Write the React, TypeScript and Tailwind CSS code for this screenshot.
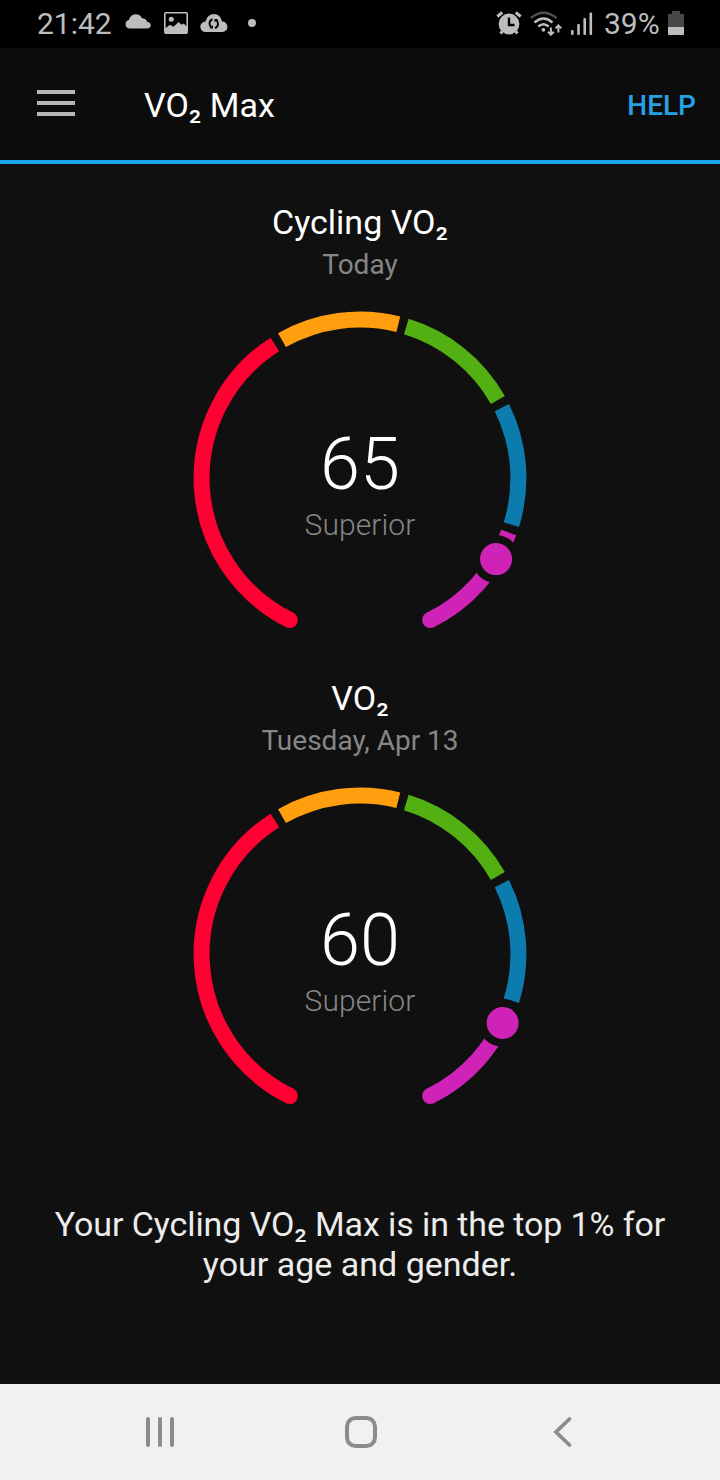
const SEGMENTS = [
	{ from: 206.3, to: 327.5, color: "#ff0033" },
	{ from: 330.5, to: 374, color: "#ff9f0f" },
	{ from: 17, to: 60.5, color: "#52b012" },
	{ from: 63.6, to: 107.1, color: "#0b7cad" },
	{ from: 110.1, to: 153.7, color: "#cf23b7" },
];

const RADIUS = 158.4;

// angles are in degrees, clockwise from the top
const point = (angle: number) => {
	const rad = (angle * Math.PI) / 180;
	return { x: 168 + RADIUS * Math.sin(rad), y: 168 - RADIUS * Math.cos(rad) };
};

const arc = (from: number, to: number) => {
	const a = point(from);
	const b = point(to);
	return `M${a.x} ${a.y}A${RADIUS} ${RADIUS} 0 0 1 ${b.x} ${b.y}`;
};

const StatusBar = () => (
	<div className="flex h-12 items-center justify-between bg-black pl-[37px] pr-[36px] text-[30px] leading-none text-[#bdbdbd]">
		<div className="flex h-full items-center pb-0.5">
			<span className="w-[75px] whitespace-nowrap pt-0.5">21:42</span>
			<svg className="mb-[3px] ml-[13px]" width="26" height="15" viewBox="0 0 26 15" fill="currentColor">
				<path d="M4.200 14.500A4.300 4.300 0 0 1 3.800 6.100C5 2.200 7.500 0.200 10.700 0.200C13.800 0.200 15.800 1.600 17 4.200C19.800 4.200 21.600 5.500 22 7.800C24.500 8.200 25.800 9.500 25.800 11.300C25.800 13.300 24.300 14.500 22 14.500Z" />
			</svg>
			<svg className="ml-[13px]" width="24" height="22" viewBox="0 0 24 22">
				<rect x="0.800" y="0.800" width="22.400" height="20.400" rx="1" fill="none" stroke="currentColor" strokeWidth="1.600" />
				<circle cx="7.300" cy="7.200" r="2.500" fill="currentColor" />
				<path d="M1 16.500L6 12.800L9.500 14.800L14.500 10L17.500 12.800L19.500 11.600L23 14.500V21H1Z" fill="currentColor" />
			</svg>
			<svg className="ml-3" width="28" height="20" viewBox="0 0 28 20">
				<path d="M5.500 19A5.200 5.200 0 0 1 5.500 8.600Q7.500 1 14 1Q20.500 1 22 8.600A5.200 5.200 0 0 1 22.500 19Z" fill="currentColor" />
				<g fill="none" stroke="#000" strokeWidth="1.900">
					<path d="M12.500 6.200Q9.500 7.500 9.500 10.500Q9.500 13 11.500 14.500" />
					<path d="M15 15.200Q18 14 18 10.800Q18 8.500 16 6.700" />
				</g>
				<path d="M9.500 15.500H13V12ZM18 6H14.500V9.500Z" fill="#000" />
			</svg>
			<span className="ml-[20px] size-2 rounded-full bg-[#bdbdbd]" />
		</div>
		<div className="flex h-full items-center pb-0.5">
			<svg width="26" height="25" viewBox="0 0 26 25">
				<path d="M1.300 5.500L6.300 1.500M24.700 5.500L19.700 1.500M4.500 22.500L7 19.500M21.500 22.500L19 19.500" stroke="currentColor" strokeWidth="2.900" />
				<circle cx="13" cy="13" r="10.400" fill="currentColor" />
				<path d="M13 6.500V14H18.500" fill="none" stroke="#000" strokeWidth="2.400" />
			</svg>
			<svg className="ml-[8px]" width="34" height="25" viewBox="0 0 34 25" fill="none" stroke="currentColor" strokeWidth="2.400">
				<path d="M0.800 7Q13.500 -3.700 26.600 7" stroke="#505050" />
				<path d="M4.500 11.500Q13.500 3.500 22.500 11.500M8.300 15.500Q13.500 11 18.700 15.500" />
				<circle cx="13.400" cy="18.800" r="1.900" fill="currentColor" stroke="none" />
				<path d="M20.900 16.500V23.500M18 20.800L20.900 23.700L23.800 20.800M28.400 21.500V14.500M25.500 17.400L28.400 14.500L31.300 17.400" strokeWidth="2" />
			</svg>
			<svg className="ml-[7px]" width="22" height="23" viewBox="0 0 22 23" fill="currentColor">
				<rect x="0" y="18" width="2.600" height="5" rx="1" />
				<rect x="6.200" y="12" width="2.600" height="11" rx="1" />
				<rect x="12.400" y="6" width="2.600" height="17" rx="1" />
				<rect x="18.500" y="0.500" width="2.600" height="22.500" rx="1" />
			</svg>
			<span className="ml-[11px] w-[55px] whitespace-nowrap pt-0.5">39%</span>
			<svg className="ml-[9px]" width="16" height="24" viewBox="0 0 16 24">
				<path d="M4 0H12V3H16V16H0V3H4Z" fill="#484848" />
				<path d="M0 16H16V23Q16 24 15 24H1Q0 24 0 23Z" fill="currentColor" />
			</svg>
		</div>
	</div>
);

const Header = () => (
	<header className="flex h-[116px] items-center border-b-4 border-[#17a4e8] bg-[#0c0c0c] pl-[37px] pr-6">
		<button className="mb-0.5 flex w-[38px] flex-col gap-[7px]" aria-label="Menu">
			<span className="h-1 w-full bg-[#b6b6b6]" />
			<span className="h-1 w-full bg-[#b6b6b6]" />
			<span className="h-1 w-full bg-[#b6b6b6]" />
		</button>
		<h1 className="ml-[69px] flex-1 pt-0.5 text-[34px] leading-10 text-white">VO₂ Max</h1>
		<button className="pt-1 text-[28px] font-medium text-[#25a1e4]">HELP</button>
	</header>
);

type GaugeProps = {
	title: string;
	date: string;
	value: number;
	label: string;
	angle: number;
};

const Gauge = ({ title, date, value, label, angle }: GaugeProps) => {
	const knob = point(angle);
	const start = point(206.3);
	const end = point(153.7);

	return (
		<section className="flex h-[476px] flex-col items-center">
			<h2 className="text-[34px] leading-10 text-white">{title}</h2>
			<p className="mt-1.5 text-[28px] leading-[33px] text-[#868686]">{date}</p>
			<div className="mt-[29px] grid place-items-center">
				<svg className="col-start-1 row-start-1" width="336" height="336" viewBox="0 0 336 336">
					{SEGMENTS.map((s) => (
						<path key={s.color} d={arc(s.from, s.to)} fill="none" stroke={s.color} strokeWidth="16" />
					))}
					<circle cx={start.x} cy={start.y} r="8" fill="#ff0033" />
					<circle cx={end.x} cy={end.y} r="8" fill="#cf23b7" />
					<circle cx={knob.x} cy={knob.y} r="24" fill="#101010" />
					<circle cx={knob.x} cy={knob.y} r="16" fill="#cf23b7" />
				</svg>
				<div className="col-start-1 row-start-1 flex flex-col items-center pt-[10px] font-light">
					<span className="text-[72px] leading-[84px] text-white">{value}</span>
					<span className="text-[30px] leading-9 tracking-[0.1px] text-[#868686]">{label}</span>
				</div>
			</div>
		</section>
	);
};

const NavBar = () => (
	<nav className="flex h-24 items-center bg-[#f1f1f1] pl-[145px] text-[#8c8c8c]">
		<svg width="30" height="32" viewBox="0 0 30 32" stroke="currentColor" strokeWidth="4" strokeLinecap="round">
			<path d="M3 3V29M15 3V29M27 3V29" />
		</svg>
		<svg className="ml-[170px]" width="32" height="32" viewBox="0 0 32 32" fill="none" stroke="currentColor" strokeWidth="4">
			<rect x="2" y="2" width="28" height="28" rx="8.500" />
		</svg>
		<svg className="ml-[176px]" width="20" height="32" viewBox="0 0 20 32" fill="none" stroke="currentColor" strokeWidth="3.800" strokeLinecap="round">
			<path d="M16.500 3L3 16L16.500 29" />
		</svg>
	</nav>
);

export default function App() {
	return (
		<div className="flex h-[1480px] w-[720px] flex-col bg-[#101010] font-[Roboto,sans-serif]">
			<StatusBar />
			<Header />
			<main className="flex-1 pt-[38px]">
				<Gauge title="Cycling VO₂" date="Today" value={65} label="Superior" angle={120.8} />
				<Gauge title="VO₂" date="Tuesday, Apr 13" value={60} label="Superior" angle={115.8} />
				<p className="mx-auto mt-[50px] w-[640px] text-center text-[34px] leading-10 text-[#ececec]">
					<span className="tracking-[-0.09px]">Your Cycling VO₂ Max is in the top 1% for</span>
					<br />
					your age and gender.
				</p>
			</main>
			<NavBar />
		</div>
	);
}
